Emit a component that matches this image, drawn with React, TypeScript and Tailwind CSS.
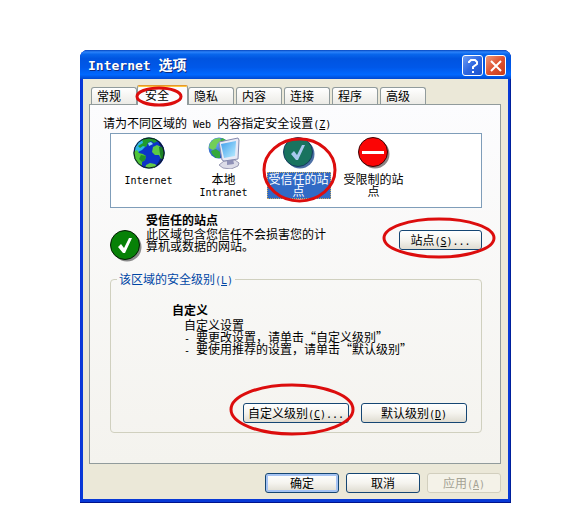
import { useState } from "react";
import type { ReactNode } from "react";
import { clsx } from "clsx";

const tabs = ["常规", "安全", "隐私", "内容", "连接", "程序", "高级"];

// Latin text takes half the width of a Chinese character
function Latin({ children }: { children: ReactNode }) {
  return <span className="font-['DejaVu_Sans_Mono',monospace] text-[10px] leading-2">{children}</span>;
}

function Hotkey({ letter }: { letter: string }) {
  return (
    <Latin>
      (<u className="underline-offset-1">{letter}</u>)
    </Latin>
  );
}

function Ring({ className }: { className: string }) {
  return (
    <svg className={clsx("pointer-events-none absolute z-10 overflow-visible", className)} viewBox="0 0 100 100" preserveAspectRatio="none" aria-hidden="true">
      <ellipse cx="50" cy="50" rx="50" ry="50" fill="none" stroke="#dc0d0d" strokeWidth="3" vectorEffect="non-scaling-stroke" />
    </svg>
  );
}

function GlobeIcon() {
  return (
    <svg width="32" height="32" viewBox="0 0 32 32" aria-hidden="true">
      <defs>
        <clipPath id="globe"><circle cx="16" cy="16" r="15.5" /></clipPath>
      </defs>
      <g clipPath="url(#globe)">
        <rect width="32" height="32" fill="#0c34c8" />
        <path d="M24 0H32V32H18C26 28 30 19 27 9Z" fill="#07207c" />
        <path d="M4 5L10 2L14 8L9 13L5 15L1 14Z" fill="#2db5e8" />
        <path d="M9 2L14 0L23 1L25 4L21 6L18 4L15 6L13 10L10 9L7 11L5 9L10 6Z" fill="#1f9c2e" />
        <path d="M0 15L4 13L6 16L10 17L13 19L12 23L9 25L9 29L5 28L1 22Z" fill="#4fc53a" />
        <path d="M8 18L13 19L12 23L9 25L6 22Z" fill="#22922b" />
        <path d="M20 10L24 8L28 10L31 15L31 20L28 22L26 18L22 18L19 15Z" fill="#5ccb44" />
        <path d="M26 10L29 10L32 16L31 21L28 22L27 17Z" fill="#1b8127" />
        <path d="M13 28L17 26L22 27L24 29L19 32H12Z" fill="#61c94a" />
        <path d="M15 6L18 5L20 7L16 9Z" fill="#8ddcf2" />
      </g>
      <circle cx="16" cy="16" r="15" fill="none" stroke="#101820" strokeWidth="1" />
    </svg>
  );
}

function IntranetIcon() {
  return (
    <svg width="32" height="32" viewBox="0 0 32 32" aria-hidden="true">
      <defs>
        <linearGradient id="screen" x1="0" y1="0" x2="1" y2="1">
          <stop offset="0" stopColor="#3f9fec" />
          <stop offset="1" stopColor="#bdeeff" />
        </linearGradient>
        <radialGradient id="smallGlobe" cx="0.35" cy="0.3" r="0.8">
          <stop offset="0" stopColor="#68a9f5" />
          <stop offset="1" stopColor="#1545b4" />
        </radialGradient>
      </defs>
      <circle cx="11" cy="11" r="10.5" fill="url(#smallGlobe)" />
      <path d="M2 6L6 2L12 1L13 4L9 7L8 11L5 13L1 11Z" fill="#72cf57" />
      <path d="M3 14L8 12L12 15L12 21L8 21L4 17Z" fill="#35a83c" />
      <path d="M14 1L18 3L20 6L15 8L12 5Z" fill="#3fb43e" />
      <path d="M11 28L16 24L27 23L31 26L30 29L23 32L15 31Z" fill="#dcdce8" stroke="#9a9bb5" />
      <path d="M19 22L25 22L26 27L19 28Z" fill="#8f91b7" />
      <path d="M11 5L30 1L31 3L30 22L16 24L14 23Z" fill="#e9eaf6" stroke="#858aae" />
      <path d="M13 7L28 4L27 19L16 21Z" fill="url(#screen)" />
    </svg>
  );
}

function CheckIcon({ selected = false }: { selected?: boolean }) {
  return (
    <svg width="32" height="32" viewBox="0 0 32 32" aria-hidden="true">
      <circle cx="17" cy="17" r="14.5" fill={selected ? "#4c70a5" : "#8b8b8b"} />
      <circle cx="15" cy="15" r="14.5" fill={selected ? "#19735f" : "#078107"} stroke={selected ? "#163b60" : "#041b04"} />
      <path d="M8 17L11 14L14 18L19 8H22L15 23H13Z" fill={selected ? "#a9c9ef" : "#fff"} />
    </svg>
  );
}

function BlockedIcon() {
  return (
    <svg width="32" height="32" viewBox="0 0 32 32" aria-hidden="true">
      <circle cx="17" cy="17" r="14.5" fill="#8b8585" />
      <circle cx="15" cy="15" r="14.5" fill="#fb0505" stroke="#3b0505" />
      <rect x="4" y="14" width="22" height="3" fill="#fff" />
    </svg>
  );
}

const zones = [
  { id: "internet", icon: <GlobeIcon />, label: <Latin>Internet</Latin> },
  { id: "intranet", icon: <IntranetIcon />, label: <>本地<br /><Latin>Intranet</Latin></> },
  { id: "trusted", icon: <CheckIcon selected />, label: "受信任的站点" },
  { id: "restricted", icon: <BlockedIcon />, label: "受限制的站点" },
];

type XpButtonProps = { children: ReactNode; className: string; primary?: boolean; disabled?: boolean };

function XpButton({ children, className, primary, disabled }: XpButtonProps) {
  return (
    <button
      type="button"
      disabled={disabled}
      className={clsx(
        "h-5 whitespace-nowrap rounded-[3px] border text-center",
        disabled
          ? "border-[#d2cfbe] bg-[#f4f2e8] text-[#a4a294]"
          : "border-[#154673] bg-linear-to-b from-white via-[#f5f4ef] to-[#dfdcd1]",
        primary && "shadow-[inset_0_0_0_2px_#a5c3f3]",
        className
      )}
    >
      {children}
    </button>
  );
}

export default function App() {
  const [activeTab, setActiveTab] = useState("安全");
  const [zone, setZone] = useState("trusted");

  return (
    <main lang="zh-CN" className="min-h-screen bg-white pt-[50px] pr-[58px] pb-7 pl-20 font-['Noto_Sans_CJK_SC',sans-serif] text-[12px] leading-3 text-black">
      <section className="overflow-hidden rounded-t-lg border-b border-[#00138c] bg-[#0839d6] px-[3px] pb-[3px] shadow-[inset_-1px_0_0_#00209c,inset_1px_0_0_#0831d9]">
        {/* Title bar */}
        <header className="-mx-[3px] flex h-[29px] items-center justify-between bg-[linear-gradient(to_bottom,#0545be_0%,#2b82fa_7%,#0866ec_15%,#0054e0_30%,#0058e9_60%,#0068ff_85%,#0048d0_100%)] pr-[5px] pl-2 text-white">
          <h1 className="text-[14px] leading-4 font-bold text-shadow-[1px_1px_0_#0b2c83]">
            <span className="font-['DejaVu_Sans_Mono',monospace] text-[13px]">Internet </span>选项
          </h1>
          <div className="flex gap-[2px] pt-[2px]">
            <button type="button" aria-label="帮助" className="flex size-[21px] items-center justify-center rounded-[3px] border border-white bg-linear-to-br from-[#6d9cf5] via-[#2e67e0] to-[#1a52cf]">
              <svg width="16" height="16" viewBox="0 0 16 16" fill="none" stroke="#fff" strokeWidth="2" aria-hidden="true">
                <path d="M4 5V4L6 2H10L12 4V6L8 9V11M8 13V15" />
              </svg>
            </button>
            <button type="button" aria-label="关闭" className="flex size-[21px] items-center justify-center rounded-[3px] border border-white bg-linear-to-br from-[#ee9778] via-[#de5231] to-[#c73a16]">
              <svg width="14" height="14" viewBox="0 0 14 14" stroke="#fff" strokeWidth="2" aria-hidden="true">
                <path d="M2 2L12 12M12 2L2 12" />
              </svg>
            </button>
          </div>
        </header>

        <div className="bg-[#ebe8d8] pt-1.5 pr-[7px] pb-1.5 pl-1.5">
          <div role="tablist" className="flex h-5 items-end gap-[2px] pl-[2px]">
            {tabs.map((tab) => {
              const active = tab === activeTab;
              return (
                <button
                  key={tab}
                  type="button"
                  role="tab"
                  aria-selected={active}
                  onClick={() => setActiveTab(tab)}
                  className={clsx(
                    "relative border border-b-0 text-left",
                    active
                      ? "z-10 -mx-[2px] h-5 w-[51px] rounded-t-[2px] border-[#919b9c] border-t-[#e5972d] bg-[#fcfcfe] pb-px pl-[7px] shadow-[inset_0_1px_0_#ffc73c]"
                      : "mb-px h-[17px] w-[46px] rounded-t-[3px] border-[#919b9c] bg-linear-to-b from-white to-[#ecebe6] pl-[5px]"
                  )}
                >
                  {tab}
                  {active && <Ring className="top-[2px] -left-px h-[17px] w-[44px]" />}
                </button>
              );
            })}
          </div>

          <div role="tabpanel" className="-mt-px border border-[#919b9c] bg-linear-to-b from-[#fcfcfe] to-[#f4f3ee] pt-3 pb-[30px]">
            <p className="pl-[13px]">
              请为不同区域的<Latin> Web </Latin>内容指定安全设置<Hotkey letter="Z" />
            </p>

            <div className="pr-[18px] pl-5">
              <div role="listbox" aria-label="区域" className="mt-1 flex h-[75px] border border-[#7f9db9] bg-white">
                {zones.map((item) => (
                  <button
                    key={item.id}
                    type="button"
                    role="option"
                    aria-selected={item.id === zone}
                    onClick={() => setZone(item.id)}
                    className="relative flex w-[75px] flex-col items-center pt-[3px]"
                  >
                    {item.icon}
                    <span
                      className={clsx(
                        "mt-[3px] w-16 border border-dotted px-px pb-px",
                        item.id === zone ? "border-[#c8ab62] bg-[#316ac5] text-white" : "border-transparent"
                      )}
                    >
                      {item.label}
                    </span>
                    {item.id === "trusted" && <Ring className="top-[5px] left-[3px] h-[62px] w-[71px]" />}
                  </button>
                ))}
              </div>

              <div className="flex items-start pt-1.5">
                <div className="mt-4">
                  <CheckIcon />
                </div>
                <div className="ml-1 w-[184px]">
                  <h2 className="mb-[2px] font-bold">受信任的站点</h2>
                  <p>此区域包含您信任不会损害您的计算机或数据的网站。</p>
                </div>
                <div className="relative mt-4 ml-auto">
                  <XpButton className="w-[83px]">
                    站点<Hotkey letter="S" /><Latin>...</Latin>
                  </XpButton>
                  <Ring className="-top-[11px] -left-[15px] h-[38px] w-[110px]" />
                </div>
              </div>

              <fieldset className="mt-[11px] rounded-[4px] border border-[#d0d0bf] pb-[9px]">
                <legend className="ml-1.5 px-[2px] text-[#0046a5]">
                  该区域的安全级别<Hotkey letter="L" />
                </legend>
                <div className="pt-[19px] pl-[61px]">
                  <h3 className="mb-[3px] font-bold">自定义</h3>
                  <div className="pl-3">
                    <p>自定义设置</p>
                    <p><Latin>- </Latin>要更改设置，请单击“自定义级别”</p>
                    <p><Latin>- </Latin>要使用推荐的设置，请单击“默认级别”</p>
                  </div>
                </div>
                <div className="mt-12 flex justify-end gap-3 pr-[14px]">
                  <div className="relative">
                    <XpButton className="w-[106px]">
                      自定义级别<Hotkey letter="C" /><Latin>...</Latin>
                    </XpButton>
                    <Ring className="-top-[18px] -left-3 h-[49px] w-[122px]" />
                  </div>
                  <XpButton className="w-[106px]">
                    默认级别<Hotkey letter="D" />
                  </XpButton>
                </div>
              </fieldset>
            </div>
          </div>

          <footer className="flex justify-end gap-[7px] pt-[9px]">
            <XpButton className="w-[74px]" primary>确定</XpButton>
            <XpButton className="w-[74px]">取消</XpButton>
            <XpButton className="w-[74px]" disabled>
              应用<Hotkey letter="A" />
            </XpButton>
          </footer>
        </div>
      </section>
    </main>
  );
}
